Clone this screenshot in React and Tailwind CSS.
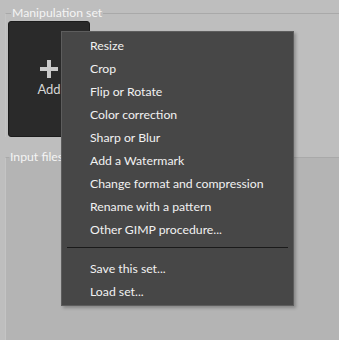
const items = [
  "Resize",
  "Crop",
  "Flip or Rotate",
  "Color correction",
  "Sharp or Blur",
  "Add a Watermark",
  "Change format and compression",
  "Rename with a pattern",
  "Other GIMP procedure...",
];

const footer = ["Save this set...", "Load set..."];

function MenuItem({ label }) {
  return (
    <div className="h-[23px] flex items-center pl-[28px] text-[12.25px] text-[#f2f2f2]">
      {label}
    </div>
  );
}

export default function App() {
  return (
    <div
      className="relative w-[339px] h-[340px] overflow-hidden bg-[#bebebe] flex flex-col pl-[5px]"
      style={{ fontFamily: 'Lato, "Noto Sans", sans-serif' }}
    >
      {/* Manipulation set group */}
      <fieldset className="mt-[5px] w-[360px] border-t border-l border-t-[#a9a9a9] border-l-[#c4c4c4] pl-[2px]">
        <legend className="ml-[3px] px-[1px] h-[16px] leading-[16px] text-[12.25px] text-[#f4f4f4]">
          Manipulation set
        </legend>
        <div className="w-[82px] h-[116px] rounded-[3px] bg-[#2a2a2a] border border-[#1c1c1c] flex flex-col items-center justify-center">
          <svg width="18" height="18" viewBox="0 0 18 18" className="mt-[2px]">
            <rect x="7" y="0" width="4" height="18" fill="#c9c9c9" />
            <rect x="0" y="7" width="18" height="4" fill="#c9c9c9" />
          </svg>
          <span className="mt-[2px] text-[13px] text-[#d6d6d6]">Add</span>
        </div>
      </fieldset>

      {/* Input files group */}
      <fieldset className="mt-[12px] flex-1 w-[360px] border-t border-l border-t-[#a9a9a9] border-l-[#c4c4c4] bg-[#b4b4b4]">
        <legend className="ml-[3px] px-[1px] h-[16px] leading-[16px] text-[12.25px] text-[#f4f4f4]">
          Input files
        </legend>
      </fieldset>

      {/* Context menu */}
      <div className="absolute left-[61px] top-[31px] w-[233px] h-[275px] bg-[#474747] border border-[#5d5d5d] shadow-[2px_2px_3px_rgba(0,0,0,0.25)] pt-[3px]">
        {items.map((label) => (
          <MenuItem key={label} label={label} />
        ))}
        <div className="h-[16px] flex items-center px-[5px]">
          <div className="h-px w-full bg-[#1a1a1a] mt-[-6px]" />
        </div>
        {footer.map((label) => (
          <MenuItem key={label} label={label} />
        ))}
      </div>
    </div>
  );
}
